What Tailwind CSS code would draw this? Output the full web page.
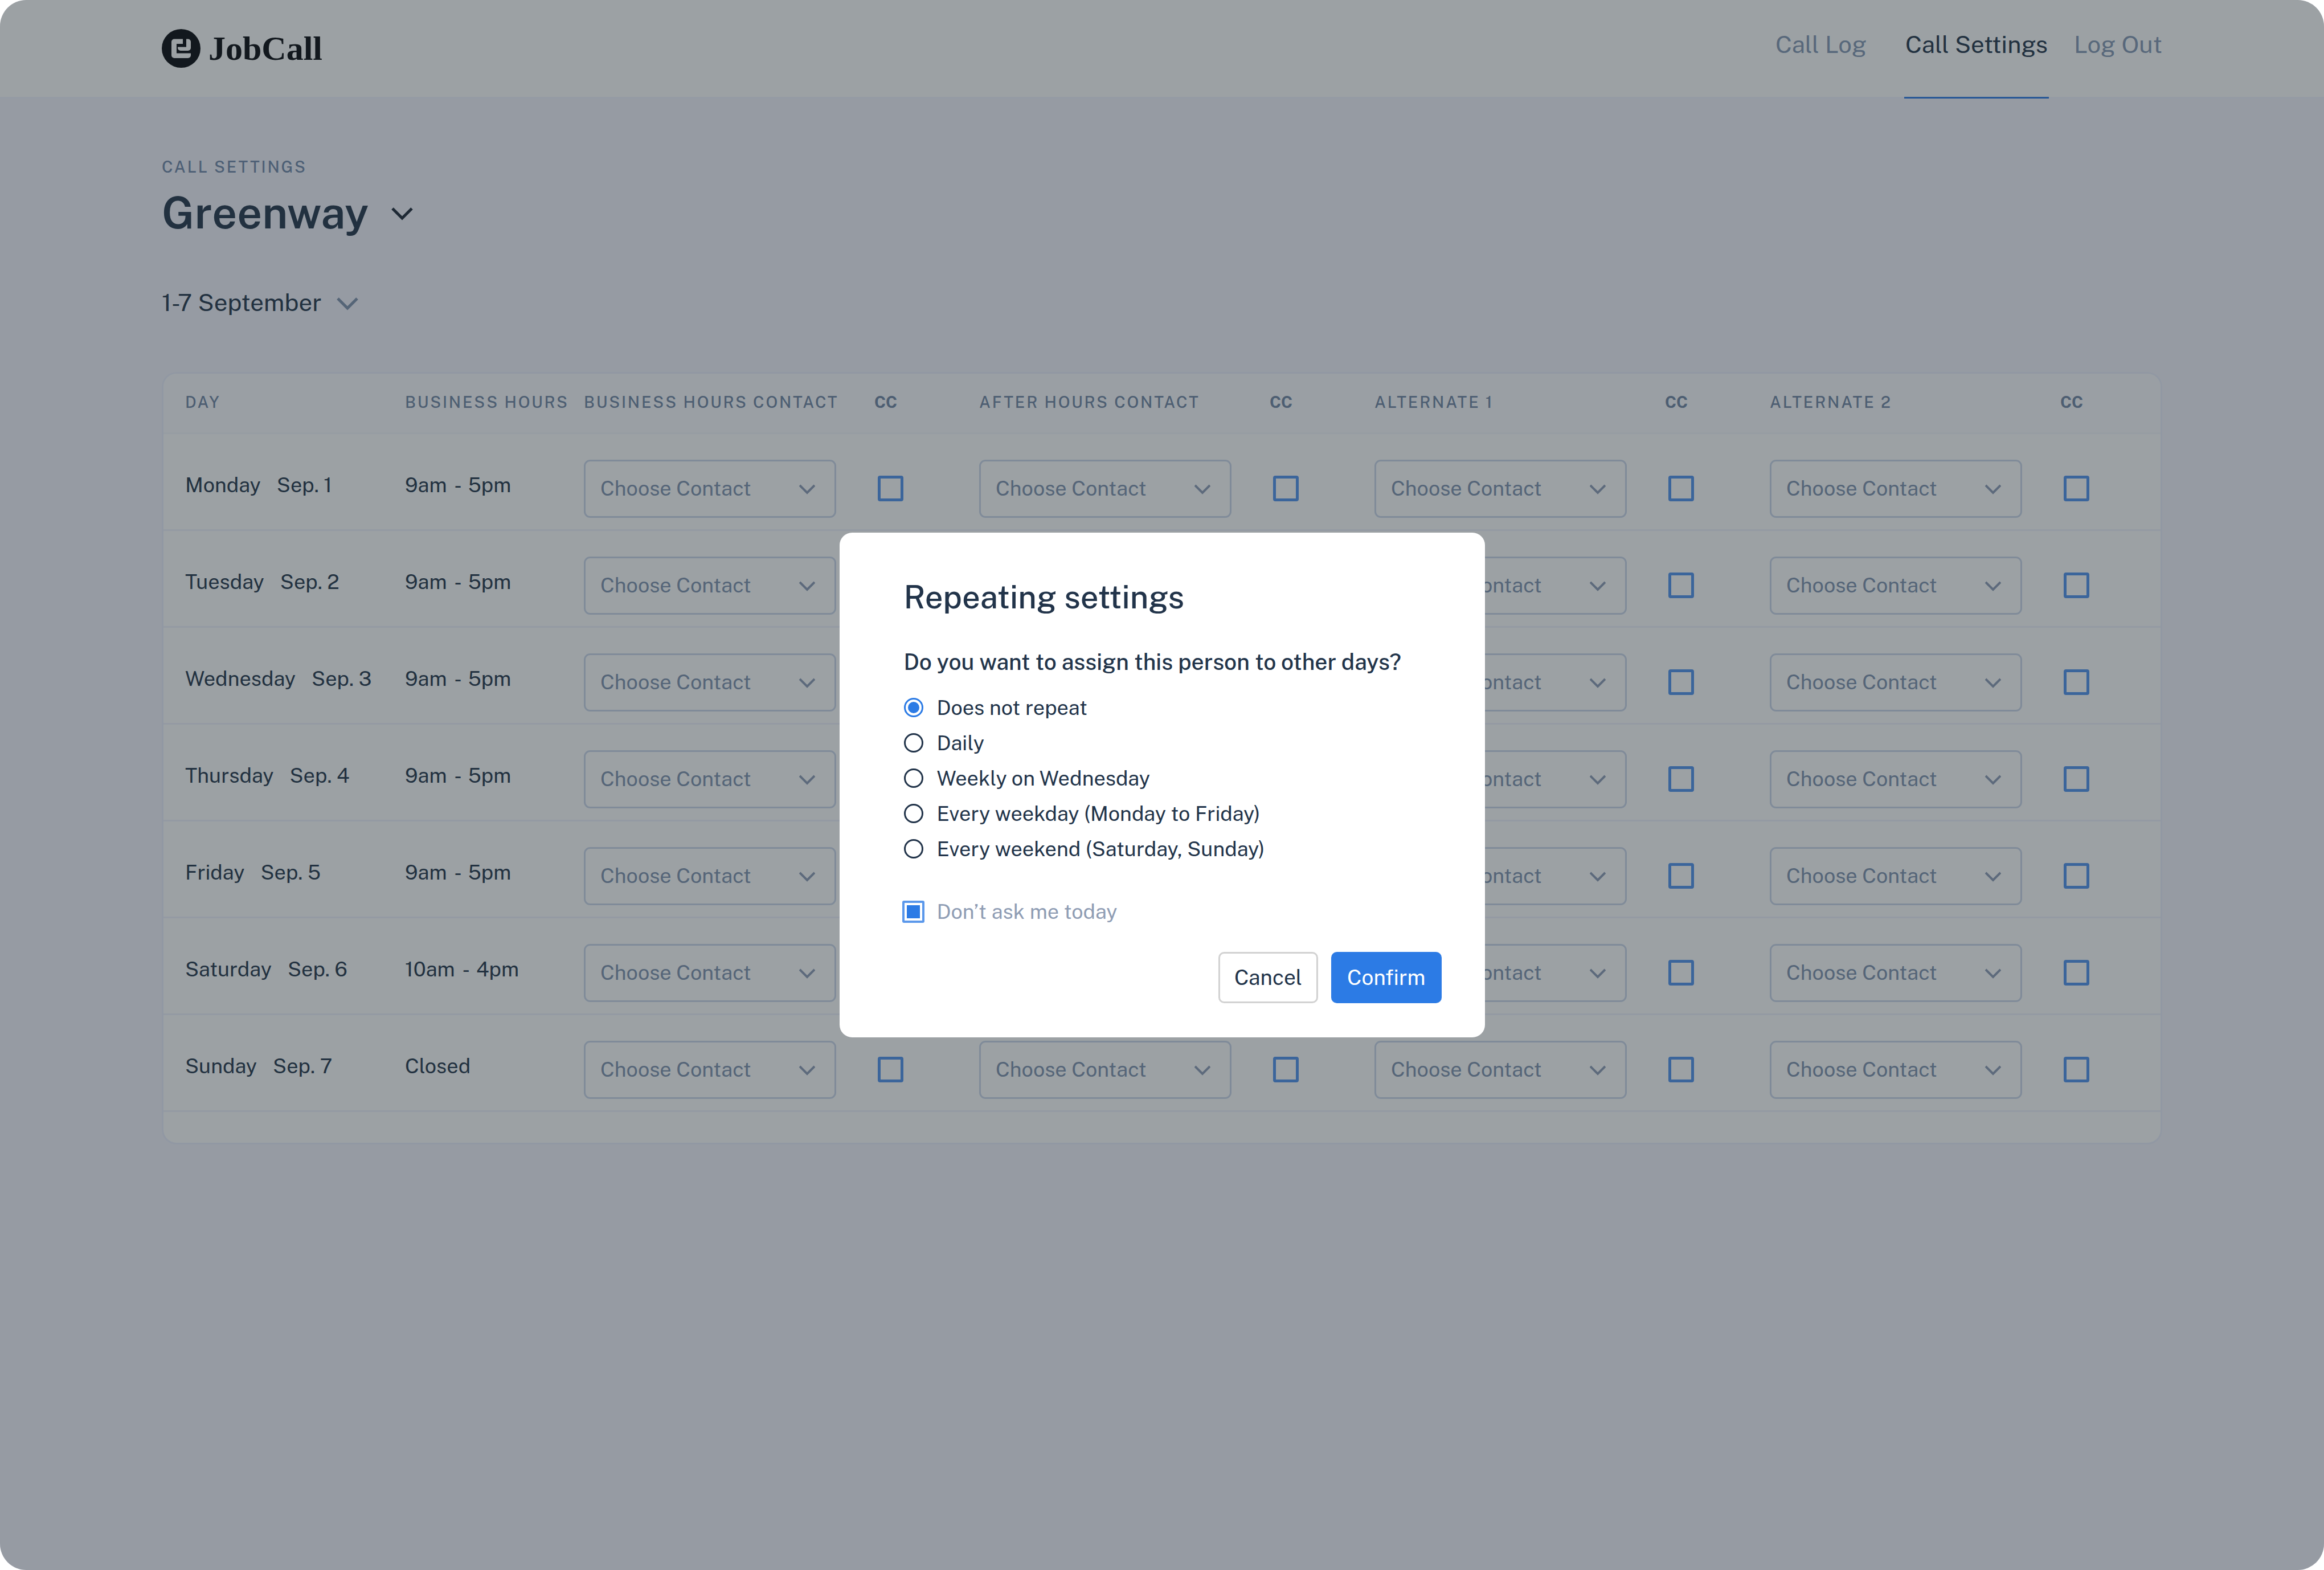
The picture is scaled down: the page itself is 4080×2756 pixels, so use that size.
<!DOCTYPE html>
<html lang="en">
<head>
  <meta charset="UTF-8">
  <meta name="viewport" content="width=device-width,initial-scale=1">
  <title>JobCall - Call Settings</title>
  <script src="https://cdn.jsdelivr.net/npm/@tailwindcss/browser@4"></script>
</head>
<body class="bg-white font-['Public_Sans','Inter',sans-serif] text-[#22344a]">
  <div class="relative min-h-screen overflow-hidden rounded-[46px] bg-[#f4f4fd]">

    <header class="border-b-[3px] border-[#f3f5ff] bg-white">
      <div class="mx-auto flex h-[170px] w-full max-w-[3512px] items-stretch justify-between">
        <a href="#" class="flex items-center gap-[14px] text-[#05070c]">
          <svg class="size-[68px]" viewBox="0 0 68 68" fill="none" aria-hidden="true">
            <circle cx="34" cy="34" r="34" fill="#05070c"/>
            <path d="M37 17.5H22a5 5 0 0 0-5 5V46a5 5 0 0 0 5 5h24a5 5 0 0 0 5-5V42.500H26V26h11z" fill="white"/>
            <path d="M43 17.500h3a5 5 0 0 1 5 5V33a5 5 0 0 1-5 5H33a5 5 0 0 1-5-5v-1.500H43z" fill="white"/>
          </svg>
          <span class="font-['Liberation_Serif',serif] text-[60px] leading-[64px] font-bold">JobCall</span>
        </a>
        <nav class="flex text-[42px] leading-[56px] text-[#8498b5]">
          <a href="#" class="mr-[66px] pt-[50px]">Call Log</a>
          <a href="#" class="mr-[44px] -mb-[3px] border-b-[3px] border-[#2c7be5] px-[2px] pt-[50px] text-[#22344a]" aria-current="page">Call Settings</a>
          <a href="#" class="pt-[50px]">Log Out</a>
        </nav>
      </div>
    </header>

    <main class="mx-auto w-full max-w-[3512px] pt-[100px]">
      <p class="text-[28px] leading-[40px] font-medium tracking-widest text-[#7088aa] uppercase">Call Settings</p>
      <h1 class="mt-[12px]">
        <button type="button" class="flex items-center gap-[40px] text-[77px] leading-[96px] font-semibold">
          Greenway
          <svg class="mt-1 h-[24px] w-[38px]" viewBox="0 0 38 24" fill="none" stroke="#1b2635" stroke-width="5" aria-hidden="true"><path d="M2 3l17 17L36 3"/></svg>
        </button>
      </h1>
      <button type="button" class="mt-[82px] flex items-center gap-[26px] text-[42px] leading-[56px]">
        1-7 September
        <svg class="mt-1 h-[24px] w-[38px]" viewBox="0 0 38 24" fill="none" stroke="#7f92ae" stroke-width="5" aria-hidden="true"><path d="M2 3l17 17L36 3"/></svg>
      </button>

      <div class="mt-[94px] overflow-hidden rounded-[26px] border-[3px] border-[#eceffd] bg-white pb-[54px]">
        <table class="w-full table-fixed border-separate border-spacing-0 text-left">
          <colgroup>
            <col class="w-[424px]"><col class="w-[314px]">
            <col class="w-[508px]"><col class="w-[186px]">
            <col class="w-[508px]"><col class="w-[186px]">
            <col class="w-[508px]"><col class="w-[186px]">
            <col class="w-[508px]"><col>
          </colgroup>
          <thead class="bg-[#fbfcff] text-[28px] leading-[40px] tracking-widest whitespace-nowrap text-[#7085a4] uppercase">
            <tr id="head-row" class="h-[106px] align-top"></tr>
          </thead>
          <tbody id="days" class="text-[36px] leading-[48px]"></tbody>
        </table>
      </div>
    </main>

    <!-- Dialog -->
    <div class="absolute inset-0 flex items-center justify-center bg-[#232e35]/45">
      <form role="dialog" aria-labelledby="dialog-title" class="w-[1133px] rounded-[22px] bg-white pt-[77px] pr-[76px] pb-[60px] pl-[113px]">
        <h2 id="dialog-title" class="text-[56px] leading-[72px] font-medium">Repeating settings</h2>
        <fieldset class="mt-[50px] text-[36px] leading-[62px]">
          <legend class="mb-[21px] text-[39px] leading-[56px] font-medium whitespace-nowrap">Do you want to assign this person to other days?</legend>
          <div id="repeat-options"></div>
        </fieldset>
        <label class="mt-[48px] flex items-center gap-[22px] text-[36px] leading-[62px] text-[#8f9db4]">
          <input type="checkbox" checked class="-ml-[3px] size-[39px] appearance-none rounded-[3px] border-[4px] border-[#5b98eb] bg-clip-content p-[4px] checked:bg-[#2c7be5]">
          Don’t ask me today
        </label>
        <div class="mt-[40px] flex justify-end gap-[23px] text-[37px] leading-[48px]">
          <button type="button" class="h-[90px] rounded-[10px] border-[3px] border-[#d2d2d2] px-[25px]">Cancel</button>
          <button type="submit" class="h-[90px] rounded-[10px] bg-[#2c7be5] px-[28px] text-white">Confirm</button>
        </div>
      </form>
    </div>
  </div>

  <script>
    const contacts = ['Business hours contact', 'After hours contact', 'Alternate 1', 'Alternate 2'];

    const days = [
      { name: 'Monday', date: 'Sep. 1', hours: ['9am', '5pm'] },
      { name: 'Tuesday', date: 'Sep. 2', hours: ['9am', '5pm'] },
      { name: 'Wednesday', date: 'Sep. 3', hours: ['9am', '5pm'] },
      { name: 'Thursday', date: 'Sep. 4', hours: ['9am', '5pm'] },
      { name: 'Friday', date: 'Sep. 5', hours: ['9am', '5pm'] },
      { name: 'Saturday', date: 'Sep. 6', hours: ['10am', '4pm'] },
      { name: 'Sunday', date: 'Sep. 7', hours: ['Closed'] }
    ];

    const repeats = [
      'Does not repeat',
      'Daily',
      'Weekly on Wednesday',
      'Every weekday (Monday to Friday)',
      'Every weekend (Saturday, Sunday)'
    ];

    // Table header
    document.getElementById('head-row').innerHTML = `
      <th class="border-b-[3px] border-[#f6f7fd] pt-[30px] pl-[38px] font-medium">Day</th>
      <th class="border-b-[3px] border-[#f6f7fd] pt-[30px] font-medium">Business hours</th>
      ${contacts.map(c => `
      <th class="border-b-[3px] border-[#f6f7fd] pt-[30px] font-medium">${c}</th>
      <th class="border-b-[3px] border-[#f6f7fd] pt-[30px] pl-[2px] font-bold tracking-normal">CC</th>`).join('')}`;

    // One row per day
    document.getElementById('days').innerHTML = days.map(d => `
      <tr class="align-top">
        <td class="border-b-[3px] border-[#f0f2fd] pt-[65px] pl-[38px] whitespace-nowrap">${d.name}<span class="ml-[28px]">${d.date}</span></td>
        <td class="border-b-[3px] border-[#f0f2fd] pt-[65px] whitespace-nowrap">${d.hours.join('<span class="mx-[8px]"> - </span>')}</td>
        ${contacts.map(c => `
        <td class="border-b-[3px] border-[#f0f2fd] pt-[45px] pb-[20px]">
          <div class="relative w-[443px]">
            <select aria-label="${c}, ${d.name}" class="block h-[102px] w-full appearance-none rounded-[11px] border-[3px] border-[#ccd8ec] pb-[2px] pl-[26px] text-[#7e92b0]">
              <option>Choose Contact</option>
            </select>
            <svg class="pointer-events-none absolute top-[43px] right-[37px] h-[18px] w-[28px]" viewBox="0 0 28 18" fill="none" stroke="#8c9cb6" stroke-width="4" aria-hidden="true"><path d="M1 2l13 13L27 2"/></svg>
          </div>
        </td>
        <td class="border-b-[3px] border-[#f0f2fd] pt-[73px] pl-[8px]">
          <input type="checkbox" aria-label="CC ${c}, ${d.name}" class="block size-[45px] appearance-none rounded-[4px] border-[5px] border-[#4f92ee] checked:bg-[#2c7be5]">
        </td>`).join('')}
      </tr>`).join('');

    // Repeat choices
    document.getElementById('repeat-options').innerHTML = repeats.map((r, i) => `
      <label class="flex items-center gap-[24px]">
        <input type="radio" name="repeat" ${i === 0 ? 'checked' : ''} class="size-[34px] appearance-none rounded-full border-[3px] border-[#22344a] bg-clip-content p-[4px] checked:border-[#2c7be5] checked:bg-[#2c7be5]">
        ${r}
      </label>`).join('');
  </script>
</body>
</html>
